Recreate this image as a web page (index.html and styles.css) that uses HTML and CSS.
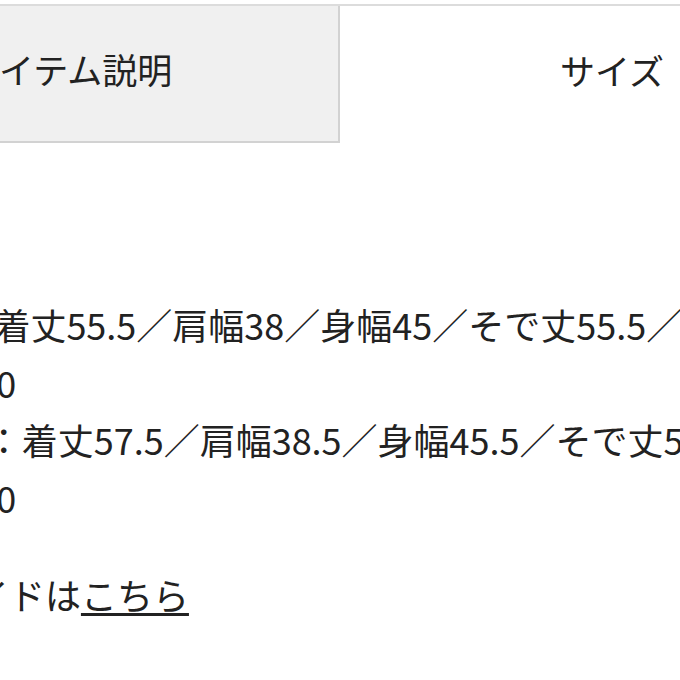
FILE: index.html
```html
<!DOCTYPE html>
<html lang="ja">
<head>
<meta charset="utf-8">
<title>サイズ</title>
<link rel="stylesheet" href="styles.css">
</head>
<body>
<div class="page">
  <div class="tabs">
    <div class="tab tab-off">アイテム説明</div>
    <div class="tab tab-on">サイズ</div>
  </div>
  <div class="content">
    <p class="sizes">
      <span class="line">Sサイズ：着丈55.5／肩幅38／身幅45／そで丈55.5／裾幅40</span>
      <span class="line">袖口幅：&#8202;10</span>
      <span class="line">MLサイズ：着丈57.5／肩幅38.5／身幅45.5／そで丈56／裾幅42</span>
      <span class="line">袖口幅：&#8202;10</span>
    </p>
    <p class="guide">サイズガイドは<a href="#" class="link">こちら</a></p>
  </div>
</div>
</body>
</html>
```

FILE: styles.css
```css
html, body {
  margin: 0;
  padding: 0;
  background: #ffffff;
}
body {
  width: 680px;
  height: 680px;
  overflow: hidden;
  font-family: "Noto Sans CJK JP", "Noto Sans", sans-serif;
  color: #222222;
}
.page {
  width: 1084px;
  margin-left: -200px;
  padding-top: 4px;
}
.tabs {
  display: flex;
  border-top: 2px solid #dcdcdc;
}
.tab {
  box-sizing: border-box;
  height: 137px;
  padding-bottom: 10px;
  display: flex;
  align-items: center;
  justify-content: center;
  font-size: 35px;
  color: #222222;
}
.tab-off {
  width: 540px;
  background: #f0f0f0;
  border-right: 2px solid #d2d2d2;
  border-bottom: 2px solid #d2d2d2;
}
.tab-on {
  flex: 1;
  background: #ffffff;
}
.content {
  padding-left: 30px;
  padding-top: 153px;
  font-size: 36px;
  line-height: 57.6px;
}
.sizes {
  margin: 0;
  white-space: nowrap;
}
.line {
  display: block;
}
.guide {
  margin: 40px 0 0;
  white-space: nowrap;
}
.link {
  color: #222222;
  text-decoration: underline;
  text-decoration-thickness: 3px;
  text-underline-offset: 3px;
}
```
